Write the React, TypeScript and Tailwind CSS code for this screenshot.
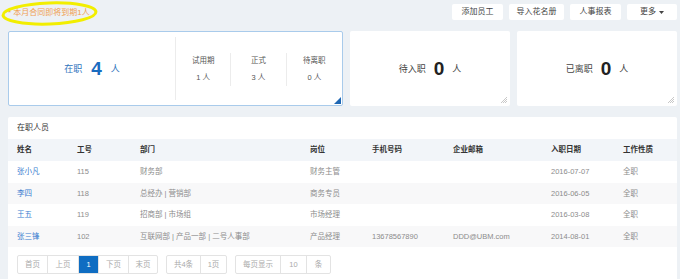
import React from 'react';

const font = { fontFamily: '"Liberation Sans", "Noto Sans CJK SC", sans-serif' };

interface Employee {
  name: string;
  no: string;
  dept: string;
  post: string;
  phone: string;
  email: string;
  date: string;
  kind: string;
}

const employees: Employee[] = [
  { name: '张小凡', no: '115', dept: '财务部', post: '财务主管', phone: '', email: '', date: '2016-07-07', kind: '全职' },
  { name: '李四', no: '118', dept: '总经办 | 营销部', post: '商务专员', phone: '', email: '', date: '2016-06-05', kind: '全职' },
  { name: '王五', no: '119', dept: '招商部 | 市场组', post: '市场经理', phone: '', email: '', date: '2016-03-08', kind: '全职' },
  { name: '张三锋', no: '102', dept: '互联网部 | 产品一部 | 二号人事部', post: '产品经理', phone: '13678567890', email: 'DDD@UBM.com', date: '2014-08-01', kind: '全职' },
];

const cols = 'grid grid-cols-[60px_63px_170px_62px_81px_98px_72px_1fr] pl-[9px] items-center';

function Corner({ active }: { active?: boolean }) {
  if (active) {
    return (
      <svg className="absolute right-[1px] bottom-[1px]" width="7" height="7" viewBox="0 0 7 7">
        <path d="M7 0 L7 7 L0 7 Z" fill="#1f67b3" />
      </svg>
    );
  }
  return (
    <svg className="absolute right-[3px] bottom-[3px]" width="6" height="6" viewBox="0 0 6 6">
      <path d="M6 0 L0 6 M6 2 L2 6 M6 4 L4 6" stroke="#c8c8c8" strokeWidth="1" />
    </svg>
  );
}

function StatCard({ label, value }: { label: string; value: string }) {
  return (
    <div className="relative flex-1 bg-white rounded-[2px] flex items-center justify-center text-[#444]">
      <span className="text-[9px] pt-[2px]">{label}</span>
      <span className="text-[19px] font-bold mx-[8px] leading-none text-[#222]">{value}</span>
      <span className="text-[9px] pt-[2px]">人</span>
      <Corner />
    </div>
  );
}

function SubStat({ label, value, last }: { label: string; value: string; last?: boolean }) {
  return (
    <div className="flex-1 flex items-center">
      <div className="flex-1 flex flex-col items-center gap-[5px] text-[7.5px] text-[#555]">
        <span>{label}</span>
        <span>{value} 人</span>
      </div>
      {!last && <div className="w-px h-[33px] bg-[#ececec]" />}
    </div>
  );
}

function PageGroup({ items }: { items: { label: string; w: number; active?: boolean }[] }) {
  return (
    <div className="flex border border-[#e3e3e3] rounded-[2px] h-[19px]">
      {items.map((it, i) => (
        <div
          key={i}
          style={{ width: it.w }}
          className={`flex items-center justify-center text-[7.5px] ${i > 0 ? 'border-l border-[#e3e3e3]' : ''} ${
            it.active ? 'bg-[#0f6dc2] text-white' : 'text-[#aaa]'
          }`}
        >
          {it.label}
        </div>
      ))}
    </div>
  );
}

export default function App() {
  return (
    <div style={font} className="relative w-[680px] h-[279px] overflow-hidden bg-[#edf1f5] pl-[8px] pr-[3px]">
      {/* top bar */}
      <div className="flex h-[31px] items-start justify-between">
        <div className="pt-[9px] text-[8px] text-[#f0a050] leading-none">* 本月合同即将到期1人</div>
        <div className="flex gap-[6px] pt-[4px]">
          {[
            ['添加员工', 51],
            ['导入花名册', 55],
            ['人事报表', 51],
          ].map(([t, w]) => (
            <button
              key={t as string}
              style={{ width: w as number }}
              className="h-[16px] bg-white rounded-[2px] text-[8px] text-[#444] flex items-center justify-center"
            >
              {t}
            </button>
          ))}
          <button className="w-[50px] h-[16px] bg-white rounded-[2px] text-[8px] text-[#444] flex items-center justify-center gap-[3px]">
            更多
            <svg width="5" height="3" viewBox="0 0 5 3">
              <path d="M0 0 L5 0 L2.5 3 Z" fill="#444" />
            </svg>
          </button>
        </div>
      </div>

      {/* stat cards */}
      <div className="flex gap-[7px] h-[75px]">
        <div className="relative w-[335px] bg-white border border-[#a9cbeb] rounded-[2px] flex items-center">
          <div className="w-[166px] flex items-center justify-center text-[#2f74bd]">
            <span className="text-[9px] pt-[2px]">在职</span>
            <span className="text-[19px] font-bold mx-[9px] leading-none text-[#1a6cc0]">4</span>
            <span className="text-[9px] pt-[2px]">人</span>
          </div>
          <div className="w-px h-[63px] bg-[#ececec]" />
          <div className="flex-1 flex items-center pt-[1px]">
            <SubStat label="试用期" value="1" />
            <SubStat label="正式" value="3" />
            <SubStat label="待离职" value="0" last />
          </div>
          <Corner active />
        </div>
        <StatCard label="待入职" value="0" />
        <StatCard label="已离职" value="0" />
      </div>

      {/* table panel */}
      <div className="mt-[11px] bg-white rounded-t-[2px] h-[200px]">
        <div className="h-[22px] flex items-center pl-[9px] text-[8px] text-[#333]">在职人员</div>
        <div className={`${cols} h-[22px] bg-[#f2f5f9] text-[7.5px] font-bold text-[#333]`}>
          <span>姓名</span>
          <span>工号</span>
          <span>部门</span>
          <span>岗位</span>
          <span>手机号码</span>
          <span>企业邮箱</span>
          <span>入职日期</span>
          <span>工作性质</span>
        </div>
        {employees.map((e, i) => (
          <div key={e.no} className={`${cols} h-[21.5px] text-[7.5px] text-[#8c8c8c] ${i % 2 ? 'bg-[#f8f8f9]' : 'bg-white'}`}>
            <span className="text-[#3b7dd0]">{e.name}</span>
            <span>{e.no}</span>
            <span>{e.dept}</span>
            <span>{e.post}</span>
            <span>{e.phone}</span>
            <span>{e.email}</span>
            <span>{e.date}</span>
            <span>{e.kind}</span>
          </div>
        ))}
        <div className="flex gap-[8px] pl-[9px] pt-[8px]">
          <PageGroup
            items={[
              { label: '首页', w: 29 },
              { label: '上页', w: 31 },
              { label: '1', w: 20, active: true },
              { label: '下页', w: 30 },
              { label: '末页', w: 29 },
            ]}
          />
          <PageGroup
            items={[
              { label: '共4条', w: 33 },
              { label: '1页', w: 26 },
            ]}
          />
          <PageGroup
            items={[
              { label: '每页显示', w: 44 },
              { label: '10', w: 26 },
              { label: '条', w: 24 },
            ]}
          />
        </div>
      </div>

      {/* highlight annotation */}
      <svg className="absolute left-0 top-0 pointer-events-none" width="100" height="28" viewBox="0 0 100 28">
        <ellipse cx="49.5" cy="13.5" rx="46.5" ry="10.5" fill="none" stroke="#f2ee00" strokeWidth="3" transform="rotate(-2 49.5 13.5)" />
      </svg>
    </div>
  );
}
